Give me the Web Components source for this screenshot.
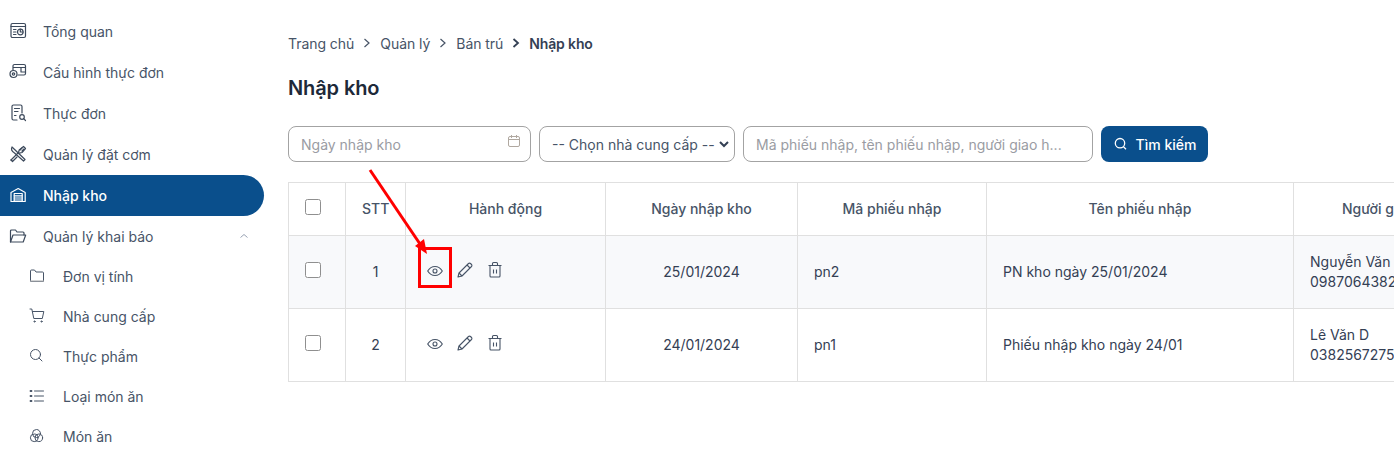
<!DOCTYPE html>
<html lang="vi">
<head>
<meta charset="utf-8">
<title>Nhập kho</title>
<style>
    html, body { margin: 0; height: 100%; overflow: hidden; background: #fff; }
    body { font-family: Inter, "Liberation Sans", sans-serif; font-size: 14px; color: #344054; }
</style>
</head>
<body>
<app-shell>
    <side-nav slot="nav">
        <nav-item icon="overview">Tổng quan</nav-item>
        <nav-item icon="menuconfig">Cấu hình thực đơn</nav-item>
        <nav-item icon="menu">Thực đơn</nav-item>
        <nav-item icon="cutlery">Quản lý đặt cơm</nav-item>
        <nav-item icon="warehouse" active>Nhập kho</nav-item>
        <nav-item icon="folderopen" expanded>Quản lý khai báo</nav-item>
        <nav-item icon="folder" sub>Đơn vị tính</nav-item>
        <nav-item icon="cart" sub>Nhà cung cấp</nav-item>
        <nav-item icon="search" sub>Thực phẩm</nav-item>
        <nav-item icon="list" sub>Loại món ăn</nav-item>
        <nav-item icon="circles" sub>Món ăn</nav-item>
    </side-nav>
    <bread-crumbs>
        <span>Trang chủ</span>
        <span>Quản lý</span>
        <span>Bán trú</span>
        <span>Nhập kho</span>
    </bread-crumbs>
    <page-title>Nhập kho</page-title>
    <filter-bar></filter-bar>
    <stock-table></stock-table>
    <call-out></call-out>
</app-shell>

<script>
const ICONS = {
    overview: '<rect x="2" y="1.5" width="14.500" height="14" rx="1.500"/><path d="M2 4.500h14.500M4.500 7.500h2.500M4.500 10h2.500M4.500 12.500h2.500"/><circle cx="11.300" cy="10" r="2.800"/><path d="M11.300 7.200V10h2.800"/>',
    menuconfig: '<path d="M4 7V3a1.500 1.500 0 0 1 1.500-1.500H15A1.500 1.500 0 0 1 16.500 3v7.500A1.500 1.500 0 0 1 15 12H9M4 4.500h12.500"/><path d="M12 4.500v4.500h4.500"/><circle cx="4.500" cy="11" r="3.500"/><circle cx="4.500" cy="11" r="1.200"/>',
    menu: '<path d="M8 16H4.500A1.500 1.500 0 0 1 3 14.500V2.500A1.500 1.500 0 0 1 4.500 1h7A1.500 1.500 0 0 1 13 2.500V9"/><path d="M5.500 4.500h5M5.500 7.500h3.500M5.500 11.500h1.500"/><circle cx="13" cy="13" r="2.300"/><path d="M14.700 14.700l1.800 1.800"/>',
    cutlery: '<path d="M3 2l13 12.500-1.500 1.500-9-8C3 6.500 2 4 3 2z"/><path d="M2 15l7.500-7.500.7-2.500L14.500 1.500 16.500 3.500 13 7.500l-2.500.7"/><path d="M3.500 16.500l4.500-4.500M2 15l1.500 1.500M13 3l-2 2M15 4l-2 2"/>',
    warehouse: '<path d="M2 15.500V6.500L9.200 2.500l7 4v9z"/><rect x="5.200" y="7.500" width="8" height="8"/><path d="M5.200 9.800h8M5.200 12h8M5.200 14h8"/>',
    folderopen: '<path d="M1.500 15V4a1 1 0 0 1 1-1h4l1.500 2H14a1 1 0 0 1 1 1v2"/><path d="M1.500 15L4 8h12.700l-2.500 7z"/>',
    folder: '<path d="M1.500 15V5a1 1 0 0 1 1-1h3l1.500 2h6.500a1 1 0 0 1 1 1v8z"/><path d="M1.500 15h13" stroke="#bbb"/>',
    cart: '<path d="M1 3h1.800l2 9.500h8.500l1.500-7H3.500"/><circle cx="5.500" cy="15.500" r=".6"/><circle cx="12.500" cy="15.500" r=".6"/>',
    search: '<circle cx="6.500" cy="8.500" r="5"/><path d="M10 12l3 3"/>',
    list: '<path d="M5.500 5h9M5.500 10h9M5.500 15h9"/><path d="M1.500 5h1M1.500 10h1M1.500 15h1" stroke-width="1.800"/>',
    circles: '<circle cx="7.500" cy="7.500" r="4"/><circle cx="5.200" cy="11.800" r="3.800"/><circle cx="9.800" cy="11.800" r="3.800"/>'
}

function icon(name, size, sw) {
    return `<svg width="${size}" height="${size}" viewBox="0 0 18 18" fill="none" stroke="currentColor" stroke-width="${sw}" stroke-linecap="round" stroke-linejoin="round">${ICONS[name]}</svg>`
}

customElements.define(
    'app-shell',
    class extends HTMLElement {
        constructor() {
            super()
            this.attachShadow({ mode: 'open' })
            this.shadowRoot.innerHTML = `
                <style>
                    :host {
                        display: flex;
                        position: relative;
                        width: 1394px;
                        height: 463px;
                        overflow: hidden;
                    }
                    .nav { flex: 0 0 264px; }
                    main {
                        flex: 1;
                        min-width: 0;
                        padding: 34px 0 0 24px;
                    }
                </style>
                <div class="nav"><slot name="nav"></slot></div>
                <main><slot></slot></main>
            `
        }
    }
)

customElements.define(
    'side-nav',
    class extends HTMLElement {
        constructor() {
            super()
            this.attachShadow({ mode: 'open' })
            this.shadowRoot.innerHTML = `
                <style>
                    :host {
                        display: flex;
                        flex-direction: column;
                        padding-top: 11px;
                    }
                </style>
                <slot></slot>
            `
        }
    }
)

customElements.define(
    'nav-item',
    class extends HTMLElement {
        constructor() {
            super()
            this.attachShadow({ mode: 'open' })
        }

        connectedCallback() {
            const sub = this.hasAttribute('sub')
            const chevron = this.hasAttribute('expanded')
                ? '<svg class="chev" width="12" height="12" viewBox="0 0 12 12" fill="none" stroke="#98a2b3" stroke-width="1"><path d="M2.500 7.500L6 4.500l3.500 3"/></svg>'
                : ''
            this.shadowRoot.innerHTML = `
                <style>
                    :host {
                        display: flex;
                        align-items: center;
                        height: ${sub ? 40 : 41}px;
                        padding-left: ${sub ? 29 : 9}px;
                        color: #475467;
                        font-size: 14px;
                    }
                    :host([expanded]) { margin-bottom: -1px; }
                    :host([active]) {
                        background: #0a4f8c;
                        color: #fff;
                        font-weight: 500;
                        border-radius: 0 21px 21px 0;
                    }
                    .ic {
                        display: flex;
                        width: 18px;
                        height: 18px;
                        margin-right: 16px;
                        color: #3d4a5c;
                        transform: translateY(-1px);
                    }
                    :host([sub]) .ic { color: #475467; }
                    :host([active]) .ic { color: #fff; }
                    .chev { margin-left: auto; margin-right: 15px; transform: translate(1px, -1px); }
                </style>
                <span class="ic">${icon(this.getAttribute('icon'), 18, sub ? 1 : 1.2)}</span>
                <slot></slot>
                ${chevron}
            `
        }
    }
)

customElements.define(
    'bread-crumbs',
    class extends HTMLElement {
        constructor() {
            super()
            this.attachShadow({ mode: 'open' })
        }

        connectedCallback() {
            const parts = [...this.children].map(c => c.textContent)
            const html = parts.map((p, i) => {
                const last = i === parts.length - 1
                return (i ? `<svg class="${last ? 'bold' : ''}" width="10" height="10" viewBox="0 0 10 10" fill="none" stroke="currentColor" stroke-width="${last ? 1.800 : 1.200}"><path d="M2.500 1l4.500 4-4.500 4"/></svg>` : '')
                    + `<span class="${last ? 'cur' : ''}">${p}</span>`
            }).join('')
            this.shadowRoot.innerHTML = `
                <style>
                    :host {
                        display: flex;
                        align-items: center;
                        gap: 9px;
                        height: 18px;
                        font-size: 14px;
                        letter-spacing: -0.05px;
                        color: #475467;
                    }
                    svg { margin: 0 -1px; color: #475467; }
                    svg.bold { color: #344054; }
                    .cur { font-weight: 600; color: #344054; letter-spacing: -0.15px; }
                </style>
                ${html}
            `
        }
    }
)

customElements.define(
    'page-title',
    class extends HTMLElement {
        constructor() {
            super()
            this.attachShadow({ mode: 'open' })
            this.shadowRoot.innerHTML = `
                <style>
                    :host {
                        display: block;
                        margin-top: 23px;
                        font-size: 20px;
                        line-height: 26px;
                        font-weight: 600;
                        letter-spacing: -0.1px;
                        color: #1d2939;
                    }
                </style>
                <slot></slot>
            `
        }
    }
)

customElements.define(
    'filter-bar',
    class extends HTMLElement {
        constructor() {
            super()
            this.attachShadow({ mode: 'open' })
            this.shadowRoot.innerHTML = `
                <style>
                    :host {
                        display: flex;
                        gap: 8px;
                        margin-top: 25px;
                        font-size: 14px;
                    }
                    .box {
                        box-sizing: border-box;
                        height: 36px;
                        border: 1px solid #a3a3a3;
                        border-radius: 8px;
                        display: flex;
                        align-items: center;
                        padding: 0 12px;
                        color: #9a9ca3;
                        white-space: nowrap;
                    }
                    .date { width: 243px; justify-content: space-between; }
                    .date svg { transform: translate(2px, -3px); margin-right: -1px; }
                    .sel { width: 196px; color: #475467; padding-right: 5px; justify-content: space-between; }
                    .txt { width: 350px; }
                    button {
                        all: unset;
                        box-sizing: border-box;
                        width: 107px;
                        height: 36px;
                        border-radius: 8px;
                        background: #0a4f8c;
                        color: #fff;
                        font: 500 14px Inter, sans-serif;
                        display: flex;
                        align-items: center;
                        justify-content: center;
                        gap: 9px;
                    }
                </style>
                <div class="box date">
                    <span>Ngày nhập kho</span>
                    <svg width="14" height="14" viewBox="0 0 14 14" fill="none" stroke="#b0a8a0" stroke-width="1"><rect x="1.500" y="2.500" width="11" height="10" rx="1.500"/><path d="M1.500 5.500h11M4.500 1v3M9.500 1v3"/></svg>
                </div>
                <div class="box sel">
                    <span>-- Chọn nhà cung cấp --</span>
                    <svg width="10" height="8" viewBox="0 0 10 8" fill="none" stroke="#344054" stroke-width="2"><path d="M1 2l4 4 4-4"/></svg>
                </div>
                <div class="box txt"><span>Mã phiếu nhập, tên phiếu nhập, người giao h...</span></div>
                <button>
                    <svg width="14" height="14" viewBox="0 0 14 14" fill="none" stroke="#fff" stroke-width="1.300"><circle cx="7" cy="6.200" r="4.700"/><path d="M10.500 9.700l2.500 2.500"/></svg>
                    <span>Tìm kiếm</span>
                </button>
            `
        }
    }
)

const COLS = ['STT', 'Hành động', 'Ngày nhập kho', 'Mã phiếu nhập', 'Tên phiếu nhập', 'Người giao hàng']
const ROWS = [
    { stt: 1, date: '25/01/2024', code: 'pn2', name: 'PN kho ngày 25/01/2024', who: 'Nguyễn Văn A', tel: '0987064382' },
    { stt: 2, date: '24/01/2024', code: 'pn1', name: 'Phiếu nhập kho ngày 24/01', who: 'Lê Văn D', tel: '0382567275' }
]

customElements.define(
    'stock-table',
    class extends HTMLElement {
        constructor() {
            super()
            this.attachShadow({ mode: 'open' })
            const actions = `
                <div class="acts">
                    <svg width="18" height="18" viewBox="0 0 18 18" fill="none" stroke="#475467" stroke-width="1.100"><path d="M1.700 10c1.800-3 4.300-4.500 7.300-4.500s5.500 1.500 7.300 4.500c-1.800 3-4.300 4.500-7.300 4.500S3.500 13 1.700 10z"/><circle cx="9" cy="10" r="2"/></svg>
                    <svg width="18" height="18" viewBox="0 0 18 18" fill="none" stroke="#475467" stroke-width="1.100" stroke-linejoin="round"><path d="M2 16l1-4L12.500 2.500a1.400 1.400 0 0 1 2 0l1 1a1.400 1.400 0 0 1 0 2L6 15z"/><path d="M11 4l3 3M3 12l3 3"/></svg>
                    <svg width="18" height="18" viewBox="0 0 18 18" fill="none" stroke="#475467" stroke-width="1.100" stroke-linejoin="round"><path d="M2.500 4.500h13M4 4.500V15a1 1 0 0 0 1 1h8a1 1 0 0 0 1-1V4.500M6.500 4.500V2.500a1 1 0 0 1 1-1h3a1 1 0 0 1 1 1v2M7.500 8.500v4M10.500 8.500v4"/></svg>
                </div>`
            const head = COLS.map(c => `<th>${c}</th>`).join('')
            const body = ROWS.map(r => `
                <tr>
                    <td class="c first"><span class="cb"></span></td>
                    <td class="c">${r.stt}</td>
                    <td>${actions}</td>
                    <td class="c">${r.date}</td>
                    <td>${r.code}</td>
                    <td>${r.name}</td>
                    <td class="two">${r.who}<br>${r.tel}</td>
                </tr>`).join('')
            this.shadowRoot.innerHTML = `
                <style>
                    :host {
                        display: block;
                        margin-top: 20px;
                        width: 1300px;
                    }
                    table {
                        table-layout: fixed;
                        border-collapse: collapse;
                        width: 1211px;
                        font-size: 14px;
                        color: #344054;
                    }
                    th, td {
                        border: 1px solid #e0e0e0;
                        padding: 0 16px 2px;
                        box-sizing: border-box;
                    }
                    th {
                        height: 53px;
                        font-weight: 500;
                        color: #475467;
                        text-align: center;
                    }
                    td { height: 73px; }
                    tbody tr:first-child { background: #f8f9fb; }
                    .c { text-align: center; padding: 0 0 2px; }
                    .first { padding-right: 8px; }
                    .cb {
                        display: inline-block;
                        box-sizing: border-box;
                        width: 16px;
                        height: 16px;
                        border: 1px solid #8f8f8f;
                        border-radius: 2.500px;
                        background: #fff;
                        vertical-align: middle;
                        transform: translateY(-2px);
                    }
                    .acts { display: flex; gap: 12px; margin-left: 4px; transform: translateY(-1px); }
                    .acts svg { display: block; }
                    .two { line-height: 20px; padding-bottom: 0; white-space: nowrap; }
                </style>
                <table>
                    <colgroup>
                        <col style="width:57px"><col style="width:60px"><col style="width:200px">
                        <col style="width:192px"><col style="width:189px"><col style="width:307px"><col style="width:206px">
                    </colgroup>
                    <thead><tr><th class="first" style="padding:0 8px 2px 0"><span class="cb"></span></th>${head}</tr></thead>
                    <tbody>${body}</tbody>
                </table>
            `
        }
    }
)

// the red marker drawn over the screenshot
customElements.define(
    'call-out',
    class extends HTMLElement {
        constructor() {
            super()
            this.attachShadow({ mode: 'open' })
            this.shadowRoot.innerHTML = `
                <style>
                    :host { position: absolute; left: 0; top: 0; width: 1394px; height: 463px; pointer-events: none; }
                    svg { display: block; }
                </style>
                <svg width="1394" height="463">
                    <path d="M370 170L420 244" stroke="#f00" stroke-width="3" fill="none"/>
                    <path d="M427 254L415 246L424 239z" fill="#f00"/>
                    <rect x="419.500" y="248.500" width="31" height="38" fill="none" stroke="#f00" stroke-width="3"/>
                </svg>
            `
        }
    }
)
</script>
</body>
</html>
